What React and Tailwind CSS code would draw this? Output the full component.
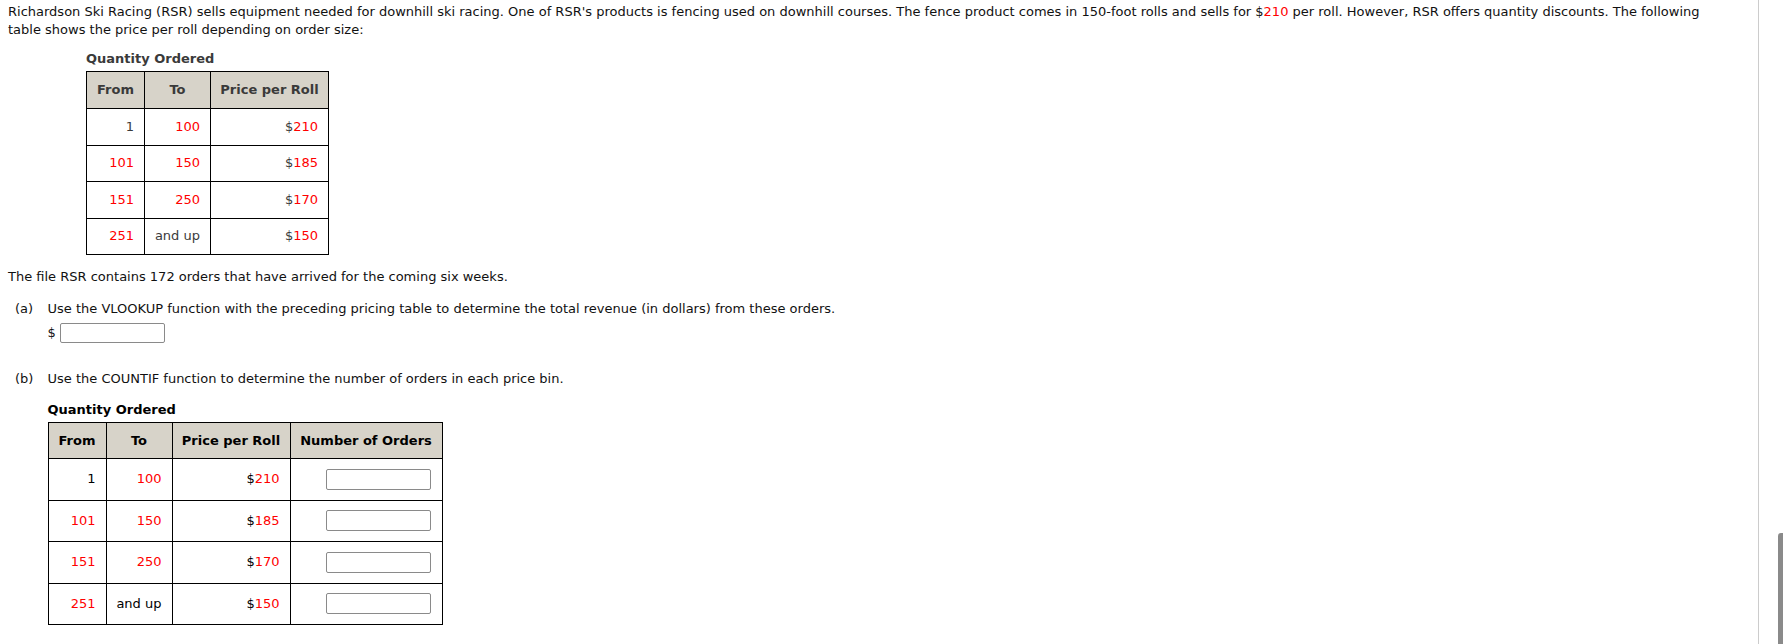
import React from 'react';

const font = { fontFamily: '"DejaVu Sans", Verdana, sans-serif' };

const pricing = [
  { from: '1', to: '100', price: '210', fromRed: false, toRed: true },
  { from: '101', to: '150', price: '185', fromRed: true, toRed: true },
  { from: '151', to: '250', price: '170', fromRed: true, toRed: true },
  { from: '251', to: 'and up', price: '150', fromRed: true, toRed: false },
];

const PriceTable = () => (
  <table className="border-collapse text-[#3a3a3a]">
    <thead>
      <tr className="h-[37px] bg-[#d7d3c9]">
        <th className="w-[58px] border border-black font-bold text-center">From</th>
        <th className="w-[66px] border border-black font-bold text-center">To</th>
        <th className="w-[118px] border border-black font-bold text-center">Price per Roll</th>
      </tr>
    </thead>
    <tbody>
      {pricing.map((row) => (
        <tr key={row.from} className="h-[36.5px]">
          <td className={`border border-black text-right pr-[10px] ${row.fromRed ? 'text-[#ff0000]' : ''}`}>{row.from}</td>
          <td className={`border border-black text-right pr-[10px] ${row.toRed ? 'text-[#ff0000]' : ''}`}>{row.to}</td>
          <td className="border border-black text-right pr-[10px]">
            $<span className="text-[#ff0000]">{row.price}</span>
          </td>
        </tr>
      ))}
    </tbody>
  </table>
);

const CountTable = () => (
  <table className="border-collapse text-black">
    <thead>
      <tr className="h-[36px] bg-[#d7d3c9]">
        <th className="w-[58px] border border-black font-bold text-center">From</th>
        <th className="w-[66px] border border-black font-bold text-center">To</th>
        <th className="w-[118px] border border-black font-bold text-center">Price per Roll</th>
        <th className="w-[152px] border border-black font-bold text-center">Number of Orders</th>
      </tr>
    </thead>
    <tbody>
      {pricing.map((row) => (
        <tr key={row.from} className="h-[41.5px]">
          <td className={`border border-black text-right pr-[10px] ${row.fromRed ? 'text-[#ff0000]' : ''}`}>{row.from}</td>
          <td className={`border border-black text-right pr-[10px] ${row.toRed ? 'text-[#ff0000]' : ''}`}>{row.to}</td>
          <td className="border border-black text-right pr-[10px]">
            $<span className="text-[#ff0000]">{row.price}</span>
          </td>
          <td className="border border-black text-right pr-[11px]">
            <input type="text" className="w-[105px] h-[21px] border border-[#8a8a8a] rounded-[2px] bg-white align-middle" />
          </td>
        </tr>
      ))}
    </tbody>
  </table>
);

export default function App() {
  return (
    <div className="flex h-screen bg-white text-[13px] leading-[18px] text-[#111]" style={font}>
      <div className="flex-1 overflow-hidden pl-2 pr-[36px] pt-[3px]">
        <p>
          Richardson Ski Racing (RSR) sells equipment needed for downhill ski racing. One of RSR's products is fencing used on downhill courses. The fence product comes in 150-foot rolls and sells for $<span className="text-[#ff0000]">210</span> per roll. However, RSR offers quantity discounts. The following table shows the price per roll depending on order size:
        </p>

        {/* Pricing table */}
        <div className="ml-[78px] mt-[11px]">
          <div className="font-bold text-[#3a3a3a] mb-[3px]">Quantity Ordered</div>
          <PriceTable />
        </div>

        <p className="mt-[13px]">The file RSR contains 172 orders that have arrived for the coming six weeks.</p>

        {/* Part (a) */}
        <div className="flex mt-[14px] pl-[7px]">
          <span className="w-[32.5px] shrink-0">(a)</span>
          <div>
            <p>Use the VLOOKUP function with the preceding pricing table to determine the total revenue (in dollars) from these orders.</p>
            <div className="flex items-center gap-[4px] mt-[5px]">
              <span>$</span>
              <input type="text" className="w-[105px] h-[20px] border border-[#8a8a8a] rounded-[2px] bg-white" />
            </div>
          </div>
        </div>

        {/* Part (b) */}
        <div className="flex mt-[27px] pl-[7px]">
          <span className="w-[32.5px] shrink-0">(b)</span>
          <div>
            <p>Use the COUNTIF function to determine the number of orders in each price bin.</p>
          </div>
        </div>

        <div className="ml-[39.5px] mt-[13px]">
          <div className="font-bold text-black mb-[3px]">Quantity Ordered</div>
          <CountTable />
        </div>
      </div>

      {/* Scrollbar strip */}
      <div className="w-[25px] shrink-0 border-l border-[#cccccc] flex flex-col justify-end items-end">
        <div className="w-[5px] h-[111px] bg-[#8a8a8a] rounded-tl-[3px]" />
      </div>
    </div>
  );
}
